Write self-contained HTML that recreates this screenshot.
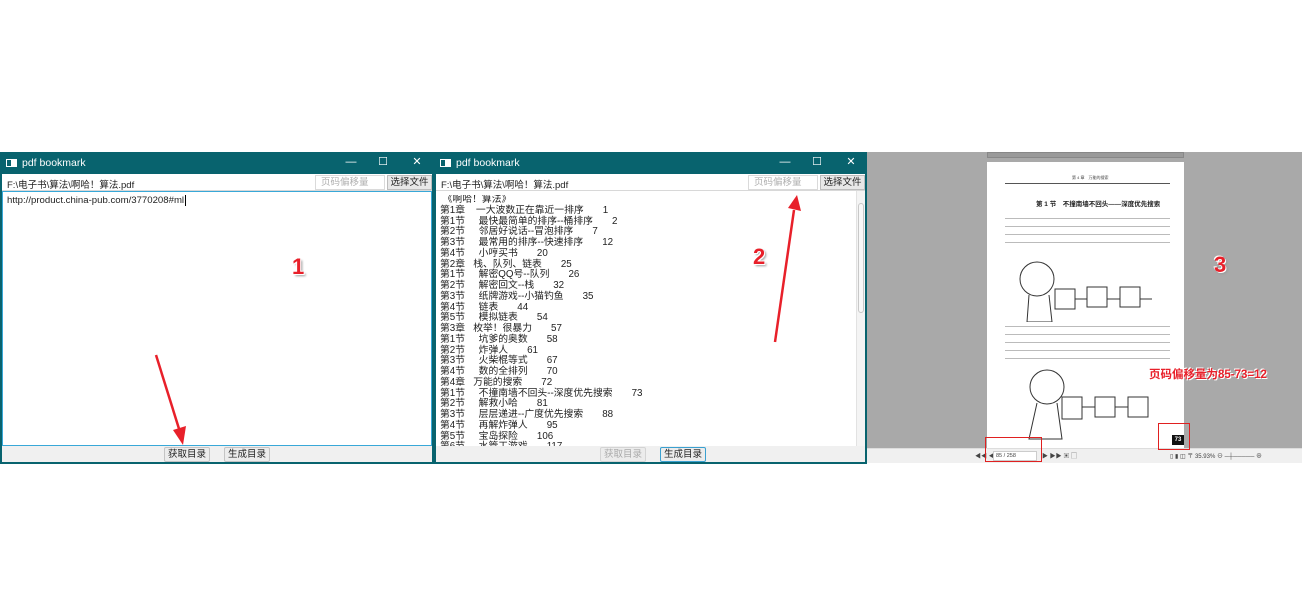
<!DOCTYPE html>
<html><head><meta charset="utf-8"><style>
*{margin:0;padding:0;box-sizing:border-box}
body{width:1302px;height:616px;background:#fff;position:relative;overflow:hidden;font-family:"Liberation Sans","Noto Sans CJK SC",sans-serif;font-size:10px;color:#222}
.abs{position:absolute}
.win{position:absolute;top:152px;height:312px;background:#08636e}
.title{position:absolute;left:0;right:0;top:0;height:22px;color:#fff;font-size:10.5px;line-height:22px;padding-left:22px}
.ticon{position:absolute;left:6px;top:7px;width:11px;height:8px;background:#fff;border:1px solid #fff}
.ticon:after{content:"";position:absolute;left:0;top:0;width:4px;height:6px;background:#08636e}
.ctl{position:absolute;top:0;height:22px;line-height:21px;color:#fff;font-size:11px;width:20px;text-align:center}
.row{position:absolute;left:2px;right:2px;top:22px;height:17px;background:#fff;border-bottom:1px solid #d8d8d8}
.path{position:absolute;left:5px;top:3px;font-size:9.5px}
.off{position:absolute;top:1px;height:15px;border:1px solid #dadada;color:#b0b0b0;font-size:9.5px;line-height:13px;padding-left:5px;width:70px}
.sel{position:absolute;top:1px;height:15px;border:1px solid #bdbdbd;background:#e8e8e8;font-size:9.5px;line-height:13px;width:45px;text-align:center}
.ta{position:absolute;left:2px;right:2px;top:39px;height:255px;background:#fff}
.bot{position:absolute;left:2px;right:2px;top:294px;height:16px;background:#f0f0f0}
.btn{position:absolute;top:1px;height:15px;border:1px solid #c4c4c4;background:#ececec;font-size:9.5px;line-height:13px;width:46px;text-align:center;border-radius:2px}
.list div{height:10.75px;line-height:10.75px;font-size:9.8px;white-space:pre}
.num{position:absolute;color:#e8202a;font-weight:bold;font-size:22px;text-shadow:1px 1px 0 #fff,-1px -1px 0 #fff,2px 2px 2px #999}
</style></head><body>

<!-- window 1 -->
<div class="win" style="left:0;width:434px">
 <div class="title"><div class="ticon"></div>pdf bookmark</div>
 <div class="ctl" style="left:341px">—</div><div class="ctl" style="left:373px">☐</div><div class="ctl" style="left:407px">✕</div>
 <div class="row"><div class="path">F:\电子书\算法\啊哈！算法.pdf</div>
  <div class="off" style="left:313px">页码偏移量</div><div class="sel" style="left:385px">选择文件</div></div>
 <div class="ta" style="border:1px solid #38a8d8"><div style="padding:3px 4px;font-size:9.6px">http://product.china-pub.com/3770208#ml<span style="border-left:1px solid #000;margin-left:1px"></span></div></div>
 <div class="bot"><div class="btn" style="left:162px">获取目录</div><div class="btn" style="left:222px">生成目录</div></div>
</div>

<!-- window 2 -->
<div class="win" style="left:434px;width:433px">
 <div class="title"><div class="ticon"></div>pdf bookmark</div>
 <div class="ctl" style="left:341px">—</div><div class="ctl" style="left:373px">☐</div><div class="ctl" style="left:407px">✕</div>
 <div class="row"><div class="path">F:\电子书\算法\啊哈！算法.pdf</div>
  <div class="off" style="left:312px">页码偏移量</div><div class="sel" style="left:384px">选择文件</div></div>
 <div class="ta"><div class="list" style="position:absolute;left:4px;top:4px;height:251px;overflow:hidden">
<div> 《啊哈！算法》</div>
<div>第1章    一大波数正在靠近一排序       1</div>
<div>第1节     最快最简单的排序--桶排序       2</div>
<div>第2节     邻居好说话--冒泡排序       7</div>
<div>第3节     最常用的排序--快速排序       12</div>
<div>第4节     小哼买书       20</div>
<div>第2章   栈、队列、链表       25</div>
<div>第1节     解密QQ号--队列       26</div>
<div>第2节     解密回文--栈       32</div>
<div>第3节     纸牌游戏--小猫钓鱼       35</div>
<div>第4节     链表       44</div>
<div>第5节     模拟链表       54</div>
<div>第3章   枚举！很暴力       57</div>
<div>第1节     坑爹的奥数       58</div>
<div>第2节     炸弹人       61</div>
<div>第3节     火柴棍等式       67</div>
<div>第4节     数的全排列       70</div>
<div>第4章   万能的搜索       72</div>
<div>第1节     不撞南墙不回头--深度优先搜索       73</div>
<div>第2节     解救小哈       81</div>
<div>第3节     层层递进--广度优先搜索       88</div>
<div>第4节     再解炸弹人       95</div>
<div>第5节     宝岛探险       106</div>
<div>第6节     水管工游戏       117</div>
 </div>
 <div class="abs" style="right:0;top:0;width:9px;height:255px;background:#f4f4f4;border-left:1px solid #e2e2e2"><div class="abs" style="left:1px;top:12px;width:6px;height:110px;border:1px solid #c8c8c8;border-radius:3px;background:#f8f8f8"></div></div>
 </div>
 <div class="bot"><div class="btn" style="left:164px;color:#aaa;border-color:#d4d4d4">获取目录</div><div class="btn" style="left:224px;border-color:#3aa0d0">生成目录</div></div>
</div>

<!-- panel 3 -->
<div class="abs" style="left:867px;top:152px;width:435px;height:296px;background:#a9a9a9"></div>
<div class="abs" style="left:987px;top:152px;width:197px;height:6px;background:#9a9a9a;border:1px solid #888"></div>
<div class="abs" style="left:987px;top:162px;width:197px;height:286px;background:#fff">
 <div class="abs" style="left:85px;top:13px;font-size:4px;color:#444">第 4 章　万能的搜索</div>
 <div class="abs" style="left:18px;top:21px;width:165px;height:1px;background:#555"></div>
 <div class="abs" style="left:49px;top:36px;font-size:6.5px;font-weight:bold;color:#222">第 1 节　不撞南墙不回头——深度优先搜索</div>
 <div class="abs" style="left:18px;top:52px;width:165px;height:30px;background:repeating-linear-gradient(#fff 0 4px,#bbb 4px 5px,#fff 5px 8px)"></div>
 <svg class="abs" style="left:30px;top:95px" width="140" height="70"><circle cx="20" cy="22" r="17" fill="none" stroke="#333"/><path d="M12 38 L10 65 L35 65 L32 38" fill="none" stroke="#333"/><rect x="38" y="32" width="20" height="20" fill="#fff" stroke="#333"/><rect x="70" y="30" width="20" height="20" fill="#fff" stroke="#333"/><rect x="103" y="30" width="20" height="20" fill="#fff" stroke="#333"/><path d="M58 42H70M90 42H103M123 42H135" stroke="#333"/></svg>
 <div class="abs" style="left:18px;top:160px;width:165px;height:42px;background:repeating-linear-gradient(#fff 0 4px,#bbb 4px 5px,#fff 5px 8px)"></div>
 <svg class="abs" style="left:30px;top:205px" width="140" height="75"><circle cx="30" cy="20" r="17" fill="none" stroke="#333"/><path d="M20 36 L12 72 L45 72 L40 36" fill="none" stroke="#333"/><rect x="45" y="30" width="20" height="22" fill="#fff" stroke="#333"/><rect x="78" y="30" width="20" height="20" fill="#fff" stroke="#333"/><rect x="111" y="30" width="20" height="20" fill="#fff" stroke="#333"/><path d="M65 40H78M98 40H111" stroke="#333"/></svg>
 <div class="abs" style="left:185px;top:273px;width:12px;height:10px;background:#111;color:#fff;font-size:6px;font-weight:bold;text-align:center;line-height:10px">73</div>
</div>
<div class="abs" style="left:867px;top:448px;width:435px;height:15px;background:#f0f0f0;border-top:1px solid #ddd;font-size:6px;color:#444">
 <span class="abs" style="left:108px;top:2px">◀◀ ◀</span>
 <div class="abs" style="left:126px;top:2px;width:44px;height:10px;background:#fff;border:1px solid #ccc;font-size:5.5px;line-height:8px;padding-left:2px">85 / 258</div>
 <span class="abs" style="left:175px;top:2px">▶ ▶▶  ▣ ▢</span>
 <span class="abs" style="left:303px;top:2px">▯ ▮ ◫ 〒   35.93%  ⊖ ─┼───── ⊕</span>
</div>
<div class="abs" style="left:985px;top:437px;width:57px;height:25px;border:1.5px solid #e02020"></div>
<div class="abs" style="left:1158px;top:423px;width:32px;height:27px;border:1.5px solid #e02020"></div>
<div class="abs" style="left:1149px;top:366px;color:#e8202a;font-weight:bold;font-size:11.5px;text-shadow:1px 1px 0 #fff,-1px -1px 0 #fff">页码偏移量为85-73=12</div>

<div class="num" style="left:292px;top:254px">1</div>
<div class="num" style="left:753px;top:244px">2</div>
<div class="num" style="left:1214px;top:252px">3</div>

<svg class="abs" style="left:0;top:0" width="1302" height="616">
 <path d="M156 355 L180 432" stroke="#e8202a" stroke-width="2.5"/>
 <path d="M173 430 L183 445 L186 426 Z" fill="#e8202a"/>
 <path d="M775 342 L794 210" stroke="#e8202a" stroke-width="2.5"/>
 <path d="M788 208 L797 195 L801 211 Z" fill="#e8202a"/>
</svg>
</body></html>
